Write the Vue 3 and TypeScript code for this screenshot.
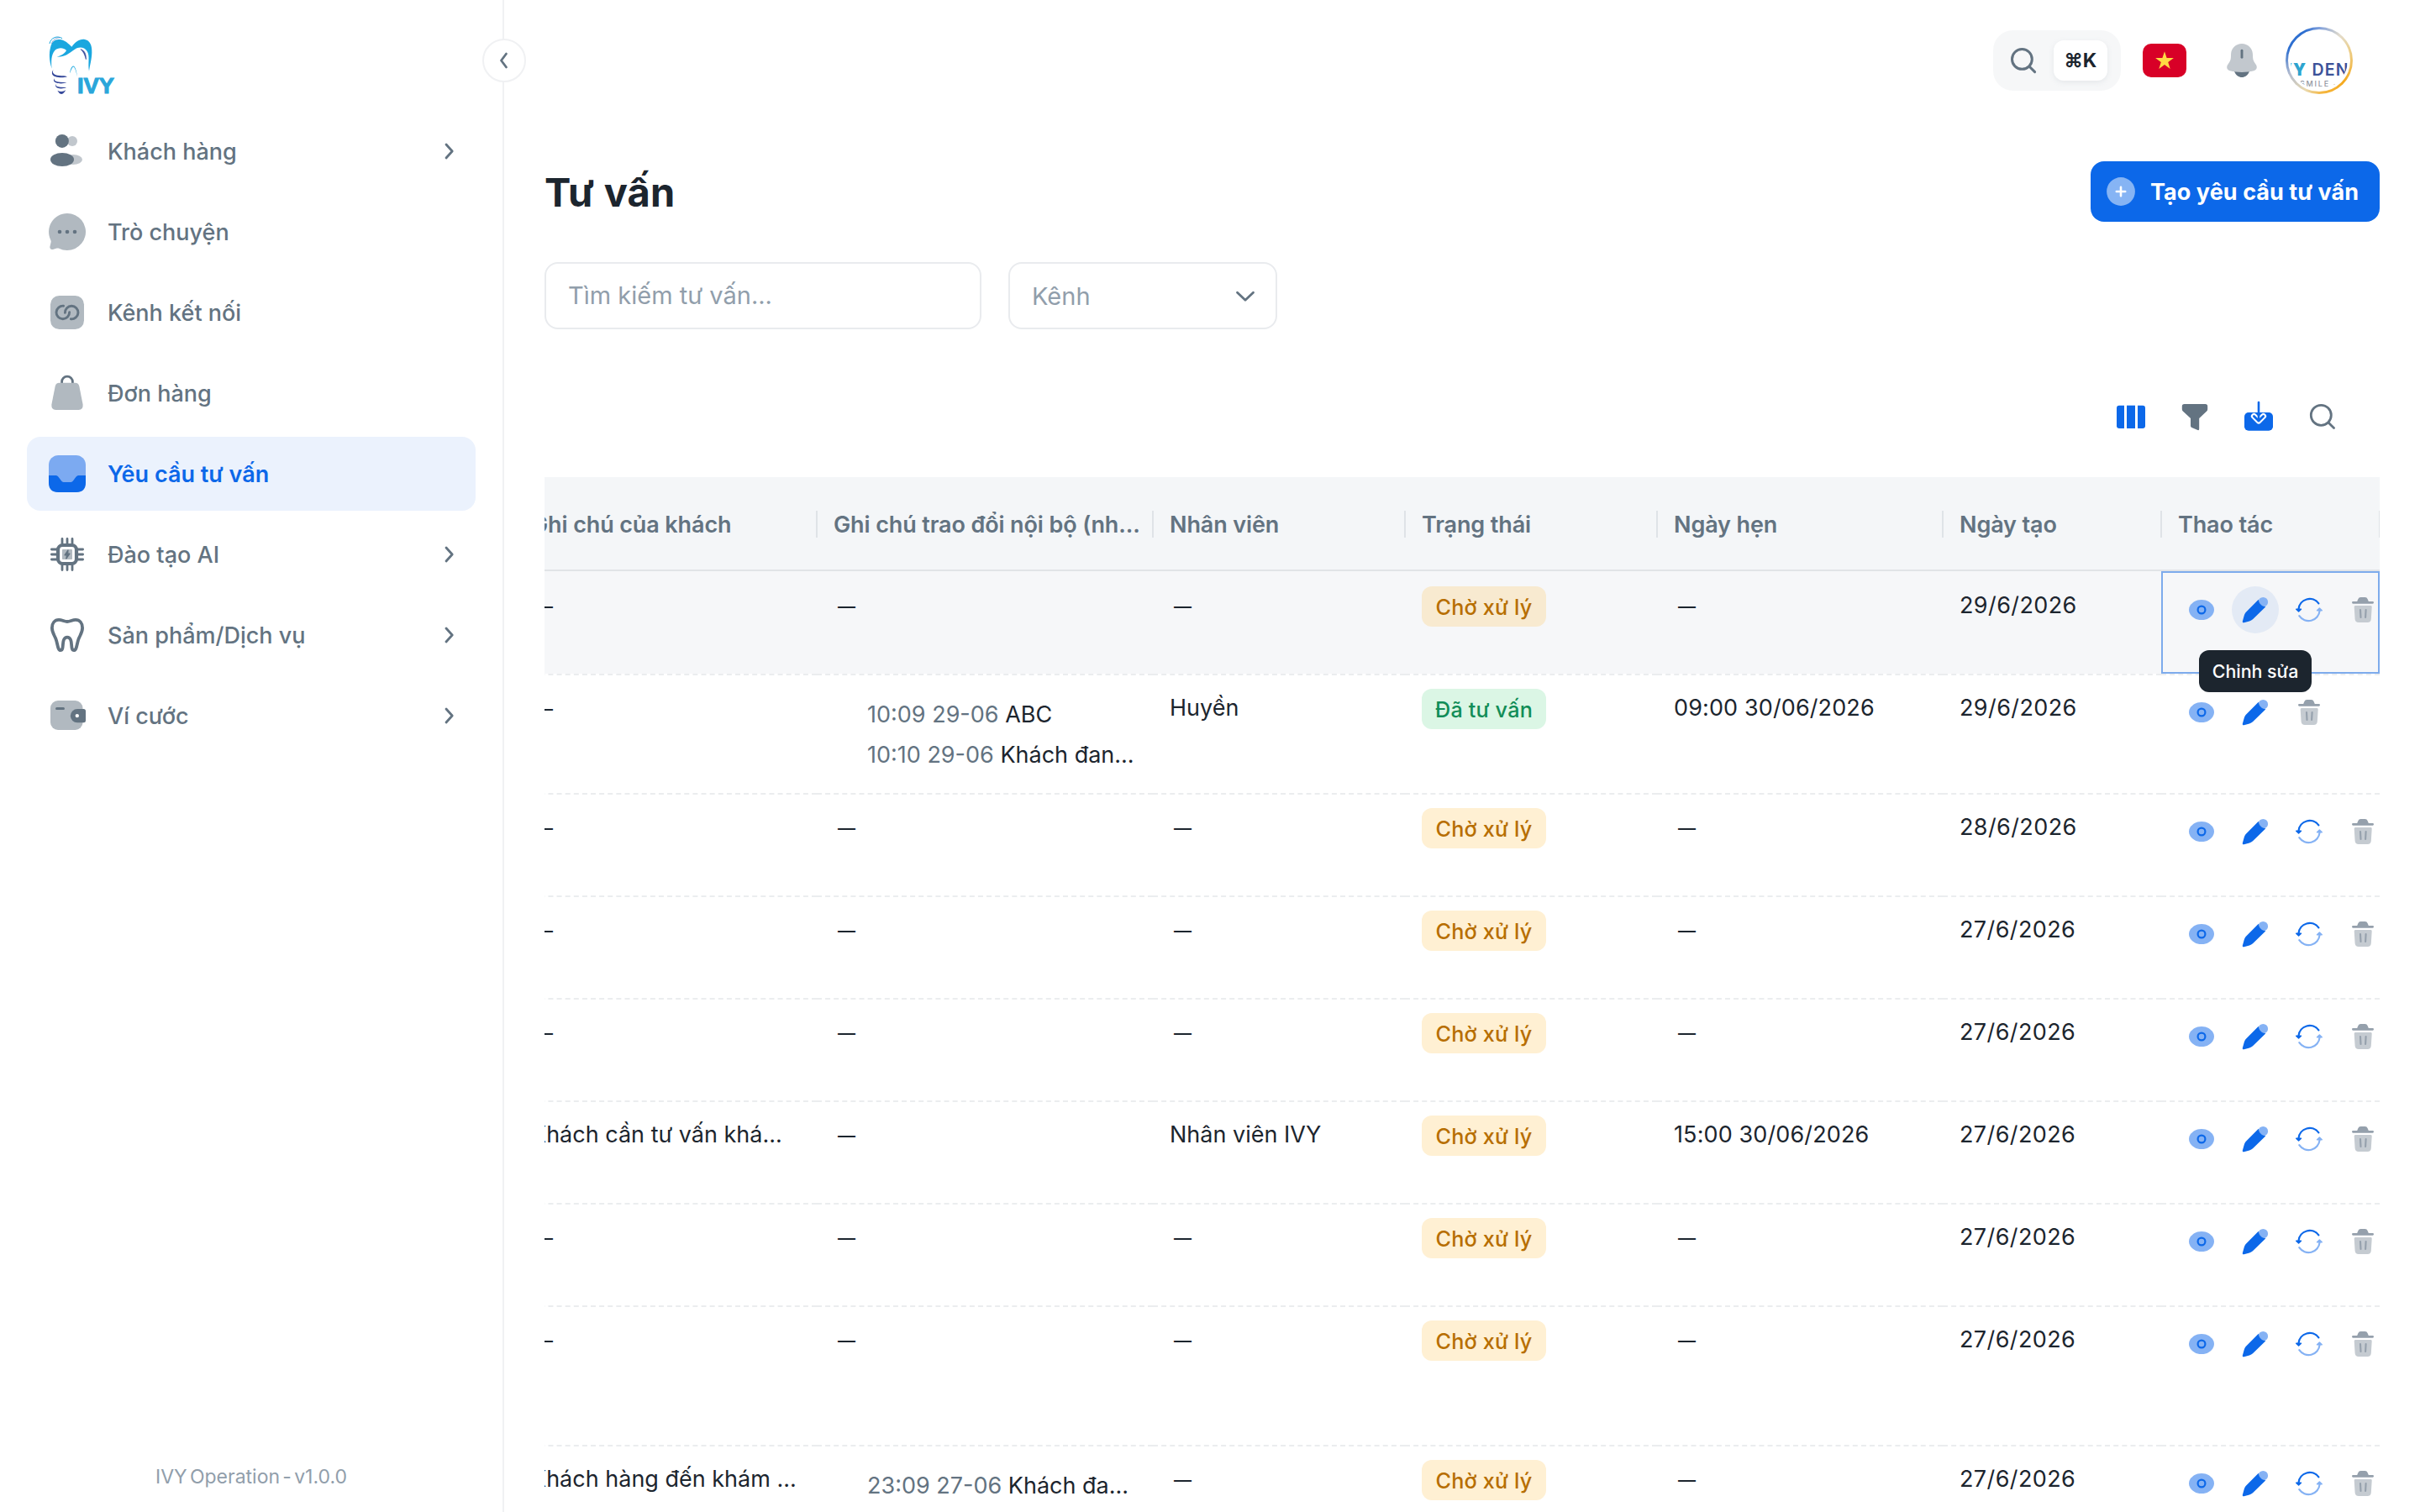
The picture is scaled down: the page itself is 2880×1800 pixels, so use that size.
<script setup lang="ts">
interface NavItem {
  id: string
  label: string
  expandable?: boolean
  active?: boolean
}

interface Note {
  time: string
  text: string
}

interface Row {
  height: number
  customerNote?: string
  notes?: Note[]
  staff?: string
  done?: boolean
  appointment?: string
  created: string
  hovered?: boolean
}

const navItems: NavItem[] = [
  { id: 'users', label: 'Khách hàng', expandable: true },
  { id: 'chat', label: 'Trò chuyện' },
  { id: 'link', label: 'Kênh kết nối' },
  { id: 'bag', label: 'Đơn hàng' },
  { id: 'inbox', label: 'Yêu cầu tư vấn', active: true },
  { id: 'chip', label: 'Đào tạo AI', expandable: true },
  { id: 'tooth', label: 'Sản phẩm/Dịch vụ', expandable: true },
  { id: 'wallet', label: 'Ví cước', expandable: true },
]

const columns: { label: string; width: number }[] = [
  { label: 'Ghi chú của khách', width: 360 },
  { label: 'Ghi chú trao đổi nội bộ (nh...', width: 400 },
  { label: 'Nhân viên', width: 300 },
  { label: 'Trạng thái', width: 300 },
  { label: 'Ngày hẹn', width: 340 },
  { label: 'Ngày tạo', width: 260 },
  { label: 'Thao tác', width: 260 },
]

const rows: Row[] = [
  { height: 122, created: '29/6/2026', hovered: true },
  {
    height: 142,
    notes: [
      { time: '10:09 29-06', text: 'ABC' },
      { time: '10:10 29-06', text: 'Khách đan...' },
    ],
    staff: 'Huyền',
    done: true,
    appointment: '09:00 30/06/2026',
    created: '29/6/2026',
  },
  { height: 122, created: '28/6/2026' },
  { height: 122, created: '27/6/2026' },
  { height: 122, created: '27/6/2026' },
  {
    height: 122,
    customerNote: 'Khách cần tư vấn khá...',
    staff: 'Nhân viên IVY',
    appointment: '15:00 30/06/2026',
    created: '27/6/2026',
  },
  { height: 122, created: '27/6/2026' },
  { height: 166, created: '27/6/2026' },
  {
    height: 122,
    customerNote: 'Khách hàng đến khám ...',
    notes: [{ time: '23:09 27-06', text: 'Khách đa...' }],
    created: '27/6/2026',
  },
]
</script>

<template>
  <div class="app">
    <aside class="sidebar">
      <svg class="logo" viewBox="48 24 264 222">
        <path
          fill="#1aa7df"
          d="M65 155C55 125 55 98 60 80C65 58 76 50 92 51C112 52 124 66 136 77C149 60 161 49 180 50C203 53 209 74 208 98C207 125 201 140 198 164C193 135 202 110 191 93C181 77 161 76 147 86C125 102 110 114 83 113C103 107 112 100 117 90C106 78 86 80 76 90C63 104 62 130 65 155Z"
        />
        <path d="M57 66C60 46 83 35 102 47" fill="none" stroke="#1aa7df" stroke-width="3" />
        <path d="M64 66C68 52 80 44 94 45" fill="none" stroke="#3b63ae" stroke-width="1.5" />
        <path d="M168 86C182 90 188 104 187 122C183 106 178 94 168 86Z" fill="#35489a" stroke="#35489a" stroke-width="2" />
        <path d="M129 172C134 140 149 130 156 184C149 152 143 142 138 152C134 158 133 163 129 172Z" fill="#1aa7df" />
        <path d="M71 160C64 168 72 180 92 180C104 181 110 180 120 184C102 190 70 187 66 174C65 167 67 162 71 160Z" fill="#35489a" />
        <path d="M75 190C71 197 79 203 94 203L118 205C102 211 76 209 72 199C71 195 73 191 75 190Z" fill="#35489a" />
        <path d="M81 211C78 217 84 221 96 221L117 222C104 229 82 227 79 219C78 215 79 212 81 211Z" fill="#35489a" />
        <path d="M85 233C95 238 105 238 115 232C110 240 106 246 100 246C94 246 90 241 85 233Z" fill="#35489a" />
        <text x="156" y="242" textLength="132" lengthAdjust="spacingAndGlyphs" class="logo-text">IVY</text>
      </svg>

      <nav class="nav">
        <a v-for="item in navItems" :key="item.id" class="nav-item" :class="{ active: item.active }">
          <svg class="nav-icon" viewBox="0 0 48 48">
            <template v-if="item.id === 'users'">
              <g fill="#c1c7cd">
                <circle cx="30" cy="11.9" r="6" />
                <ellipse cx="31" cy="34" rx="11" ry="5.9" />
              </g>
              <g fill="#637381">
                <circle cx="17.9" cy="11.9" r="8" />
                <ellipse cx="18" cy="34" rx="14" ry="8" />
              </g>
            </template>
            <template v-else-if="item.id === 'chat'">
              <path fill="#b1b9c0" d="M24 2A22 22 0 1 1 14.2 43.7C13.3 43.3 12.6 43.3 11.6 43.6L6.9 44.9C4.4 45.5 2.8 43.6 3.5 41.3L4.6 36.5C4.9 35.3 4.6 34.4 4.2 33.5A22 22 0 0 1 24 2Z" />
              <g fill="#637381">
                <circle cx="15" cy="24" r="2.3" />
                <circle cx="24" cy="24" r="2.3" />
                <circle cx="33" cy="24" r="2.3" />
              </g>
            </template>
            <template v-else-if="item.id === 'link'">
              <rect x="4" y="4" width="40" height="40" rx="10.5" fill="#b1b9c0" />
              <g fill="none" stroke="#637381" stroke-width="2.9" stroke-linecap="round">
                <path d="M19.6 16.2A7.8 7.8 0 1 0 26.6 23.6" />
                <path d="M19.6 16.2A7.8 7.8 0 1 0 26.6 23.6" transform="rotate(180 24 24)" />
              </g>
            </template>
            <template v-else-if="item.id === 'bag'">
              <path fill="none" stroke="#637381" stroke-width="2.8" d="M17.6 12.5V10.6A6.4 6.4 0 0 1 30.4 10.6V12.5" />
              <path fill="#b1b9c0" d="M14.5 11.8H33.5Q37.4 11.8 38.3 15.7L42.6 37.5Q43.4 44 37.5 44H10.5Q4.6 44 5.4 37.5L9.7 15.7Q10.6 11.8 14.5 11.8Z" />
            </template>
            <template v-else-if="item.id === 'inbox'">
              <rect x="2" y="2" width="44" height="44" rx="11.5" fill="#7caaf1" />
              <path fill="#0c68e9" d="M2 26H9.5C13 26 13.6 28 15.6 30.5C17.6 33.5 18.5 34 21.5 34H26.5C29.5 34 30.4 33.5 32.4 30.5C34.4 28 35 26 38.5 26H46V34.5Q46 46 34.5 46H13.5Q2 46 2 34.5Z" />
            </template>
            <template v-else-if="item.id === 'chip'">
              <g fill="none" stroke="#637381" stroke-linecap="round">
                <path stroke-width="2.8" d="M18 5.4V11M24 5.4V11M30 5.4V11M18 37V42.6M24 37V42.6M30 37V42.6M5.4 18H11M5.4 24H11M5.4 30H11M37 18H42.6M37 24H42.6M37 30H42.6" />
                <rect x="13" y="13" width="22" height="22" rx="5.5" stroke-width="4.2" />
              </g>
              <rect x="18" y="18" width="12" height="12" rx="0.8" fill="#b1b9c0" />
              <path fill="#637381" stroke="#637381" stroke-width="1.2" stroke-linejoin="round" d="M25 18.8L21 24.8H23.4L22.8 29.2L27 23.2H24.7Z" />
            </template>
            <template v-else-if="item.id === 'tooth'">
              <path
                fill="none"
                stroke="#637381"
                stroke-width="3.8"
                stroke-linejoin="round"
                d="M24 8C20.5 8 18 5.9 14 5.9C9 5.9 5.9 10 5.9 15.5C5.9 20.5 8.5 24 10.2 28C12.6 33.5 12.5 42.1 16 42.1C20 42.1 18 33.5 20 29.5C20.9 27.6 22.2 26.7 24 26.7C25.8 26.7 27.1 27.6 28 29.5C30 33.5 28 42.1 32 42.1C35.5 42.1 35.4 33.5 37.8 28C39.5 24 42.1 20.5 42.1 15.5C42.1 10 39 5.9 34 5.9C30 5.9 27.5 8 24 8Z"
              />
            </template>
            <template v-else>
              <rect x="4" y="6" width="38.5" height="35" rx="9" fill="#b1b9c0" />
              <path d="M11.5 15.4H19.5" stroke="#637381" stroke-width="3" stroke-linecap="round" />
              <path fill="#637381" d="M36 16H43.5Q46 16 46 18.5V30Q46 32.3 43.5 32.3H36A8.15 8.15 0 0 1 36 16Z" />
              <circle cx="35.8" cy="24.1" r="2.2" fill="#fff" />
            </template>
          </svg>
          <span class="nav-label">{{ item.label }}</span>
          <svg v-if="item.expandable" class="nav-arrow" viewBox="0 0 32 32">
            <path d="M13 8L20.2 16L13 24" />
          </svg>
        </a>
      </nav>

      <p class="version">IVY Operation - v1.0.0</p>

      <button class="collapse">
        <svg viewBox="0 0 32 32"><path d="M18.5 8L12.5 16L18.5 24" /></svg>
      </button>
    </aside>

    <main class="main">
      <header class="topbar">
        <div class="search-pill">
          <svg viewBox="0 0 40 40" width="40" height="40">
            <g fill="none" stroke="#637381" stroke-width="3" stroke-linecap="round">
              <circle cx="18.4" cy="18.4" r="11.9" />
              <path d="M27.2 27.2L33.6 33.6" />
            </g>
          </svg>
          <kbd>⌘K</kbd>
        </div>
        <svg class="flag" viewBox="0 0 52 40">
          <rect width="52" height="40" rx="10" fill="#d80027" />
          <path fill="#ffda44" d="M26 9.2L28.6 17.1H36.9L30.2 22L32.7 29.9L26 25L19.3 29.9L21.8 22L15.1 17.1H23.4Z" />
        </svg>
        <svg class="bell" viewBox="0 0 48 48">
          <path fill="#637381" d="M14.8 36.5C16.8 41.8 20.3 44 24 44C27.7 44 31.2 41.8 33.2 36.5Z" />
          <path fill="#c2c8ce" d="M24 4C17 4 11.5 9 11.1 16L10.9 20.5C10.8 23.5 9.3 26 7.7 28.2C5 31.8 6.2 35 9.8 36.2C18 38.5 30 38.5 38.2 36.2C41.8 35 43 31.8 40.3 28.2C38.7 26 37.2 23.5 37.1 20.5L36.9 16C36.5 9 31 4 24 4Z" />
          <path d="M24 12.2V20.3" stroke="#637381" stroke-width="2.9" stroke-linecap="round" />
        </svg>
        <div class="avatar">
          <div class="avatar-inner">
            <span class="avatar-name"><b>VY</b> DEN</span>
            <span class="avatar-sub">SMILE -</span>
          </div>
        </div>
      </header>

      <div class="heading">
        <h1>Tư vấn</h1>
        <button class="create">
          <svg viewBox="0 0 40 40" width="40" height="40">
            <circle cx="20" cy="20" r="16.9" fill="#86b4f4" />
            <path d="M20 14.8V25.2M14.8 20H25.2" stroke="#fff" stroke-width="2.6" stroke-linecap="round" />
          </svg>
          <span>Tạo yêu cầu tư vấn</span>
        </button>
      </div>

      <div class="filters">
        <div class="field search-field">Tìm kiếm tư vấn...</div>
        <div class="field select-field">
          <span>Kênh</span>
          <svg viewBox="0 0 32 32" width="32" height="32"><path d="M6.5 11.3L16 20.2L25.5 11.3" /></svg>
        </div>
      </div>

      <div class="toolbar">
        <svg viewBox="0 0 40 40">
          <g fill="#0c68e9">
            <path d="M6 6.7H12V34H6Q3 34 3 31V9.7Q3 6.7 6 6.7Z" />
            <rect x="15" y="6.7" width="10" height="27.3" />
            <path d="M28 6.7H34Q37 6.7 37 9.7V31Q37 34 34 34H28Z" />
          </g>
        </svg>
        <svg viewBox="0 0 40 40">
          <path fill="#637381" d="M7.5 5H32.5Q35.2 5 35.2 7.7V11Q35.2 12.5 34.2 13.5L25.2 22V34.6Q25.2 36.6 23.5 36L16.4 33.1Q15 32.5 15 31V22L5.8 13.5Q4.8 12.5 4.8 11V7.7Q4.8 5 7.5 5Z" />
        </svg>
        <svg viewBox="0 0 40 40">
          <rect x="3" y="15" width="34" height="21.7" rx="5" fill="#0c68e9" />
          <path d="M14.4 19.4L20 25L25.6 19.4" fill="none" stroke="#fff" stroke-width="7" stroke-linecap="round" stroke-linejoin="round" />
          <path d="M14.4 19.4L20 25L25.6 19.4" fill="none" stroke="#0c68e9" stroke-width="2.8" stroke-linecap="round" stroke-linejoin="round" />
          <path d="M20 3V25" stroke="#0c68e9" stroke-width="2.6" stroke-linecap="round" />
        </svg>
        <svg viewBox="0 0 40 40">
          <g fill="none" stroke="#637381" stroke-width="2.8" stroke-linecap="round">
            <circle cx="18.3" cy="18.3" r="12" />
            <path d="M27.2 27.2L33.5 33.5" />
          </g>
        </svg>
      </div>

      <div class="table">
        <div class="scroller">
          <div class="head">
            <div v-for="col in columns" :key="col.label" class="head-cell" :style="{ width: col.width + 'px' }">
              <span>{{ col.label }}</span>
              <i></i>
            </div>
          </div>
          <div
            v-for="(row, index) in rows"
            :key="index"
            class="row"
            :class="{ hovered: row.hovered }"
            :style="{ height: row.height + 'px' }"
          >
            <div class="cell" :style="{ width: columns[0].width + 'px' }">
              <span v-if="row.customerNote">{{ row.customerNote }}</span>
              <span v-else class="dash">—</span>
            </div>
            <div class="cell" :style="{ width: columns[1].width + 'px' }">
              <div v-if="row.notes" class="notes">
                <p v-for="note in row.notes" :key="note.time"><time>{{ note.time }}</time> {{ note.text }}</p>
              </div>
              <span v-else class="dash">—</span>
            </div>
            <div class="cell" :style="{ width: columns[2].width + 'px' }">
              <span v-if="row.staff">{{ row.staff }}</span>
              <span v-else class="dash">—</span>
            </div>
            <div class="cell" :style="{ width: columns[3].width + 'px' }">
              <span class="badge" :class="{ done: row.done }">{{ row.done ? 'Đã tư vấn' : 'Chờ xử lý' }}</span>
            </div>
            <div class="cell" :style="{ width: columns[4].width + 'px' }">
              <span v-if="row.appointment" class="date">{{ row.appointment }}</span>
              <span v-else class="dash">—</span>
            </div>
            <div class="cell" :style="{ width: columns[5].width + 'px' }">
              <span class="date created">{{ row.created }}</span>
            </div>
            <div class="cell" :class="{ focused: row.hovered }" :style="{ width: columns[6].width + 'px' }">
              <div class="actions">
                <button class="action">
                  <svg viewBox="0 0 36 36">
                    <path fill="#85b2f4" d="M18 6C11 6 7.2 9.2 4.7 12.6C2.4 15.8 2.4 20.2 4.7 23.4C7.2 26.8 11 30 18 30C25 30 28.8 26.8 31.3 23.4C33.6 20.2 33.6 15.8 31.3 12.6C28.8 9.2 25 6 18 6Z" />
                    <circle cx="18" cy="18" r="4.4" fill="none" stroke="#0c68e9" stroke-width="2.2" />
                  </svg>
                </button>
                <button class="action" :class="{ current: row.hovered }">
                  <svg viewBox="0 0 36 36">
                    <circle cx="27.3" cy="8.7" r="5.8" fill="#85b2f4" />
                    <path fill="#0c68e9" d="M21.8 5.8C22.2 10.4 25.6 14 30.4 14.3L15 29.2C13.8 30.3 12.5 30.9 11 31.4L4.5 33.3C3.4 33.6 2.6 32.7 2.8 31.7L4.6 25.2C5.2 23.2 6 21.7 7.4 20.3Z" />
                  </svg>
                  <span v-if="row.hovered" class="tooltip">Chỉnh sửa</span>
                </button>
                <button v-if="!row.done" class="action">
                  <svg viewBox="0 0 36 36">
                    <g fill="none" stroke-width="2.2" stroke-linecap="round">
                      <path stroke="#0c68e9" d="M5.5 17A13.3 13.3 0 0 1 29.4 10.3" />
                      <path stroke="#85b2f4" d="M30.6 19A13.3 13.3 0 0 1 6.3 25.2" />
                    </g>
                    <path fill="#0c68e9" stroke="#0c68e9" stroke-width="1.4" stroke-linejoin="round" d="M2.7 17.2H8.5L5.6 20Z" />
                    <path fill="#85b2f4" stroke="#85b2f4" stroke-width="1.4" stroke-linejoin="round" d="M27.5 18.8H33.3L30.4 16Z" />
                  </svg>
                </button>
                <button class="action">
                  <svg viewBox="0 0 36 36">
                    <path fill="#95a0ac" d="M6.3 8H11.2L12.3 5.2Q13.2 3 15.4 3H20.6Q22.8 3 23.7 5.2L24.8 8H29.7Q31 8 31 9.35T29.7 10.7H6.3Q5 10.7 5 9.35T6.3 8Z" />
                    <path fill="#c5cbd1" d="M9 13H27.5Q28.8 13 28.7 14.5L27.8 29Q27.5 33 23.5 33H12.9Q9 33 8.6 29L7.7 14.5Q7.6 13 9 13Z" />
                    <path d="M15 18L15.5 27M21.6 18L21.1 27" stroke="#95a0ac" stroke-width="2.1" stroke-linecap="round" />
                  </svg>
                </button>
              </div>
            </div>
          </div>
        </div>
      </div>
    </main>
  </div>
</template>

<style>
body {
  margin: 0;
  overflow: hidden;
}
</style>

<style scoped>
* {
  box-sizing: border-box;
}
svg {
  display: block;
  flex: none;
}
button {
  border: 0;
  padding: 0;
  background: none;
  font: inherit;
}
p,
h1 {
  margin: 0;
}
.app {
  display: flex;
  width: 2880px;
  height: 1800px;
  overflow: hidden;
  background: #fff;
  color: #1c252e;
  font-family: Inter, 'Noto Sans', sans-serif;
  font-size: 27px;
  line-height: 44px;
  white-space: nowrap;
}

.sidebar {
  position: relative;
  flex: none;
  display: flex;
  flex-direction: column;
  width: 600px;
  padding: 38px 32px 20px;
  border-right: 2px solid #f0f1f3;
}
.logo {
  width: 88px;
  height: 74px;
  margin-left: 24px;
}
.logo-text {
  fill: #2aa6da;
  stroke: #2aa6da;
  stroke-width: 3px;
  font: bold 77px 'Liberation Sans', sans-serif;
}
.nav {
  display: flex;
  flex-direction: column;
  gap: 8px;
  margin-top: 24px;
}
.nav-item {
  display: flex;
  align-items: center;
  height: 88px;
  padding: 0 16px 0 24px;
  border-radius: 16px;
  color: #637381;
  font-weight: 500;
}
.nav-item.active {
  background: #ebf2fd;
  color: #0c68e9;
  font-weight: 600;
}
.nav-icon {
  width: 48px;
  height: 48px;
  margin-right: 24px;
}
.nav-label {
  flex: 1;
  padding-top: 2px;
}
.nav-arrow {
  width: 32px;
  height: 32px;
}
.nav-arrow path,
.collapse path,
.select-field path {
  fill: none;
  stroke: #637381;
  stroke-width: 2.8;
  stroke-linecap: round;
  stroke-linejoin: round;
}
.version {
  margin-top: auto;
  text-align: center;
  color: #919eab;
  font-size: 23px;
  letter-spacing: 0;
  word-spacing: -3.2px;
}
.collapse {
  position: absolute;
  top: 46px;
  right: -28px;
  display: flex;
  align-items: center;
  justify-content: center;
  width: 52px;
  height: 52px;
  border: 2px solid #f0f1f3;
  border-radius: 50%;
  background: #fff;
}
.collapse svg {
  width: 32px;
  height: 32px;
}

.main {
  flex: none;
  display: flex;
  flex-direction: column;
  width: 2280px;
  padding: 32px 48px 0;
}
.topbar {
  display: flex;
  justify-content: flex-end;
  align-items: center;
  height: 80px;
  padding-right: 32px;
}
.search-pill {
  display: flex;
  align-items: center;
  gap: 16px;
  height: 72px;
  padding: 0 16px;
  border-radius: 24px;
  background: #f6f7f8;
}
kbd {
  width: 64px;
  height: 48px;
  border-radius: 12px;
  background: #fff;
  box-shadow: 0 2px 6px rgba(145, 158, 171, 0.16);
  font: 700 23px/48px Inter, sans-serif;
  text-align: center;
}
.flag {
  width: 52px;
  height: 40px;
  margin-left: 26px;
}
.bell {
  width: 48px;
  height: 48px;
  margin-left: 42px;
}
.avatar {
  width: 80px;
  height: 80px;
  margin-left: 28px;
  padding: 3px;
  border-radius: 50%;
  background: conic-gradient(#7f9fdc, #e3dccb 40deg, #ecd08f 70deg, #f5a91d 130deg, #f5b63f 175deg, #e9d9ae 205deg, #b5bdd0 245deg, #2e6fd0 290deg, #2e6fd0 335deg, #7f9fdc);
}
.avatar-inner {
  display: flex;
  flex-direction: column;
  align-items: center;
  height: 74px;
  padding-top: 35px;
  overflow: hidden;
  border: 3px solid #fff;
  border-radius: 50%;
  background: #fff;
  color: #3c5299;
  font: 600 19.5px/20px Inter, sans-serif;
}
.avatar-name {
  margin-left: -12px;
  letter-spacing: 1.2px;
}
.avatar-name b {
  color: #2da4cf;
}
.avatar-sub {
  color: #9196a0;
  font-size: 9px;
  font-weight: 500;
  line-height: 14px;
  letter-spacing: 1.8px;
}

.heading {
  display: flex;
  justify-content: space-between;
  align-items: center;
  height: 72px;
  margin-top: 80px;
}
h1 {
  padding-top: 2px;
  font-size: 47px;
  font-weight: 700;
  line-height: 74px;
  letter-spacing: 0.2px;
}
.create {
  display: flex;
  align-items: center;
  width: 344px;
  height: 72px;
  padding-left: 16px;
  border-radius: 16px;
  background: #0c68e9;
  color: #fff;
  font-weight: 700;
}
.create span {
  margin-left: 15px;
  padding-top: 1px;
  letter-spacing: 0.05px;
}

.filters {
  display: flex;
  gap: 32px;
  margin-top: 48px;
}
.field {
  height: 80px;
  padding: 0 28px 0 26px;
  border: 2px solid #e9ebee;
  border-radius: 16px;
  color: #919eab;
  font-size: 29px;
  line-height: 76px;
}
.search-field {
  width: 520px;
}
.select-field {
  display: flex;
  justify-content: space-between;
  align-items: center;
  width: 320px;
  padding: 2px 20px 0 26px;
}

.toolbar {
  display: flex;
  justify-content: flex-end;
  gap: 36px;
  margin-top: 84px;
  padding-right: 48px;
}
.toolbar svg {
  width: 40px;
  height: 40px;
}

.table {
  flex: 1;
  margin-top: 52px;
  overflow: hidden;
}
.scroller {
  width: 2220px;
  margin-left: -36px;
}
.head {
  display: flex;
  height: 112px;
  border-bottom: 2px solid #e1e4e7;
  background: #f4f6f8;
}
.head-cell {
  flex: none;
  display: flex;
  align-items: center;
  justify-content: space-between;
  padding: 3px 0 0 20px;
  color: #637381;
  font-weight: 600;
  letter-spacing: -0.12px;
}
.head-cell span {
  width: 0;
}
.head-cell i {
  width: 2px;
  height: 32px;
  margin: -1px -1px 0 0;
  background: #dfe3e7;
}
.row {
  display: flex;
}
.cell {
  flex: none;
  padding: 16px 0 0 20px;
  border-top: 2px dashed #ebedef;
}
.row.hovered {
  background: #f6f7f9;
}
.row.hovered .cell {
  border-top-color: transparent;
}
.row .cell.focused {
  padding: 16px 0 0 18px;
  border: 2px solid #7dabec;
}
.cell > span {
  display: inline-block;
  padding-top: 1px;
  vertical-align: top;
}
.date {
  letter-spacing: 0.12px;
}
.created {
  letter-spacing: 0.4px;
}
.cell > .dash {
  margin-left: 5px;
  padding-top: 2px;
  font-size: 21px;
  font-weight: 500;
  line-height: 44px;
}
.notes {
  margin: 7px 0 0 40px;
  line-height: 48px;
}
.notes time {
  color: #637381;
}
.cell > .badge {
  width: 148px;
  height: 48px;
  border-radius: 12px;
  background: #fff0d3;
  color: #b76e00;
  font-size: 25.2px;
  font-weight: 550;
  line-height: 48px;
  letter-spacing: 0.2px;
  text-align: center;
}
.hovered .cell > .badge {
  background: #f8ead0;
}
.cell > .badge.done {
  background: #dbf6e5;
  color: #118d57;
}
.actions {
  display: flex;
  gap: 8px;
}
.action {
  position: relative;
  flex: none;
  display: flex;
  align-items: center;
  justify-content: center;
  width: 56px;
  height: 56px;
  border-radius: 50%;
}
.action svg {
  width: 36px;
  height: 36px;
}
.action.current {
  background: #e3eaf5;
}
.tooltip {
  position: absolute;
  top: 76px;
  left: -39px;
  z-index: 5;
  width: 134px;
  height: 50px;
  border-radius: 12px;
  background: #1c252e;
  color: #fff;
  font-size: 21.4px;
  font-weight: 500;
  line-height: 50px;
  text-align: center;
}
</style>
